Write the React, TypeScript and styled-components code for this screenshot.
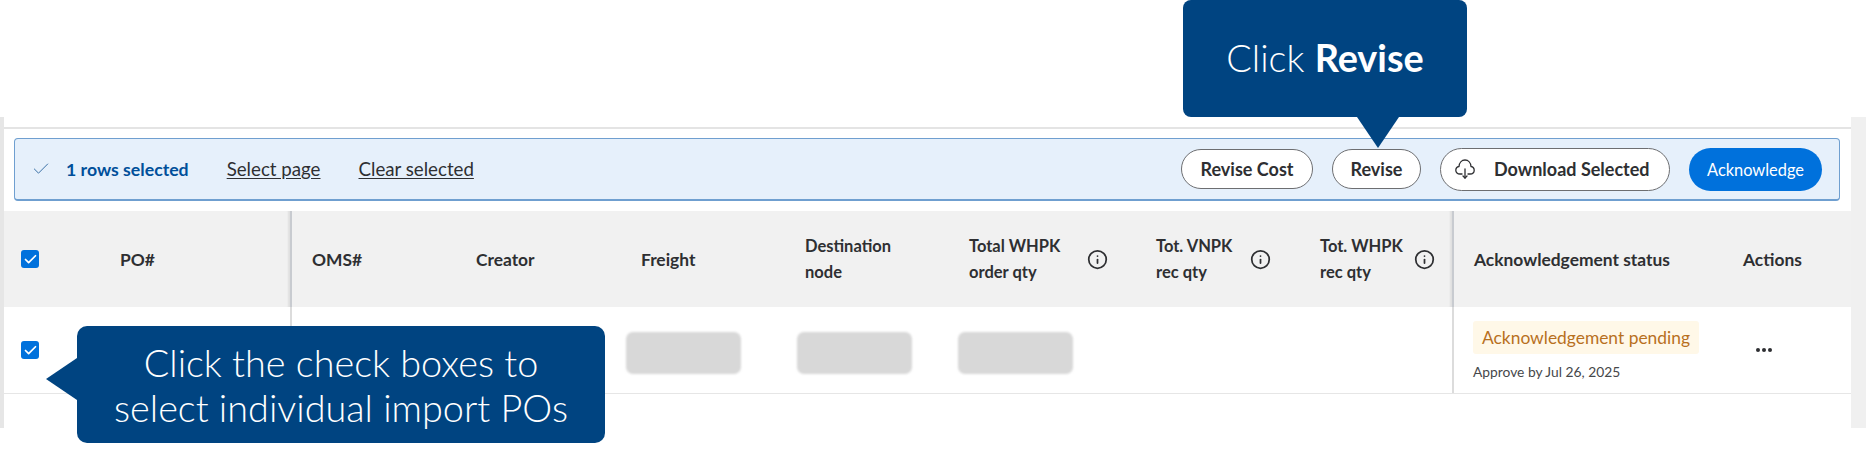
import React from "react";
import styled, { createGlobalStyle } from "styled-components";
import { Check, Info } from "lucide-react";

const GlobalStyle = createGlobalStyle`
  html, body {
    margin: 0;
    padding: 0;
    background: #fff;
    font-family: Lato, "Open Sans", sans-serif;
    color: #2e2f32;
  }
`;

const columns = "116px 172px 184px 165px 164px 164px 187px 164px 134px 289px 108px";

const CheckBox = () => (
  <Box>
    <Check size={15} strokeWidth={2.8} color="#fff" />
  </Box>
);

const HeadInfo = () => (
  <InfoWrap>
    <Info size={21} strokeWidth={2} color="#2e2f32" />
  </InfoWrap>
);

const CloudIcon = () => (
  <svg width="20" height="20" viewBox="0 0 20 20" fill="none" stroke="#2e2f32" strokeWidth="1.3" strokeLinecap="round" strokeLinejoin="round">
    <path d="M7 15H5C2.5 15 .8 13.4.8 11.2c0-2 1.4-3.4 3.2-3.7C4.200 3.700 6.700 1 10 1s5.800 2.700 6 6.500c1.800.3 3.200 1.700 3.200 3.700 0 2.200-1.700 3.800-4.200 3.800h-2" />
    <path d="M10 10v9" />
    <path d="M8 17l2 2 2-2" />
  </svg>
);

export default function App() {
  return (
    <Page>
      <GlobalStyle />
      <TopCallout>
        <span>
          Click <b>Revise</b>
        </span>
      </TopCallout>
      <Frame>
        <TopRule />
        <SelectionBar>
          <SelectionLeft>
            <Check size={20} strokeWidth={1.2} color="#3a70a6" />
            <RowsCount>1 rows selected</RowsCount>
            <BarLink>Select page</BarLink>
            <BarLink>Clear selected</BarLink>
          </SelectionLeft>
          <SelectionRight>
            <PillButton $width={132}>Revise Cost</PillButton>
            <PillButton $width={89}>Revise</PillButton>
            <DownloadButton>
              <CloudIcon />
              Download Selected
            </DownloadButton>
            <PrimaryButton>Acknowledge</PrimaryButton>
          </SelectionRight>
        </SelectionBar>
        <TableHead>
          <HeadCell><CheckBox /></HeadCell>
          <HeadCell $divider>PO#</HeadCell>
          <HeadCell $pad={20}>OMS#</HeadCell>
          <HeadCell>Creator</HeadCell>
          <HeadCell>Freight</HeadCell>
          <HeadCell>
            <HeadText $width={150}>Destination<br />node</HeadText>
          </HeadCell>
          <HeadCell>
            <HeadText $width={118}>Total WHPK<br />order qty</HeadText>
            <HeadInfo />
          </HeadCell>
          <HeadCell>
            <HeadText $width={94}>Tot. VNPK<br />rec qty</HeadText>
            <HeadInfo />
          </HeadCell>
          <HeadCell $divider>
            <HeadText $width={94}>Tot. WHPK<br />rec qty</HeadText>
            <HeadInfo />
          </HeadCell>
          <HeadCell $pad={20}>Acknowledgement status</HeadCell>
          <HeadCell>Actions</HeadCell>
        </TableHead>
        <TableRow>
          <RowCell $pad={17}><CheckBox /></RowCell>
          <RowCell $divider />
          <RowCell />
          <RowCell />
          <RowCell><Blurred $shift={-15} /></RowCell>
          <RowCell><Blurred $shift={-8} /></RowCell>
          <RowCell><Blurred $shift={-11} /></RowCell>
          <RowCell />
          <RowCell $divider />
          <StatusCell>
            <StatusPill>Acknowledgement pending</StatusPill>
            <ApproveBy>Approve by Jul 26, 2025</ApproveBy>
          </StatusCell>
          <RowCell>
            <Dots>
              <i /><i /><i />
            </Dots>
          </RowCell>
        </TableRow>
      </Frame>
      <LeftCallout>
        Click the check boxes to
        <br />
        select individual import POs
      </LeftCallout>
    </Page>
  );
}

const Page = styled.div`
  position: relative;
  width: 1866px;
  height: 453px;
  overflow: hidden;
  background: #fff;
`;

const Frame = styled.div`
  box-sizing: border-box;
  margin-top: 117px;
  height: 311px;
  border-left: 4px solid #e6e6e6;
  border-right: 15px solid #f0f0f0;
  display: flex;
  flex-direction: column;
`;

const TopRule = styled.div`
  height: 2px;
  margin-top: 10px;
  background: #e4e4e4;
`;

const SelectionBar = styled.div`
  box-sizing: border-box;
  height: 63px;
  margin: 9px 11px 10px 10px;
  padding: 0 17px 0 16px;
  display: flex;
  align-items: center;
  justify-content: space-between;
  background: #e6f0fb;
  border: 1px solid #6f9fd0;
  border-bottom-width: 2px;
  border-radius: 4px;
`;

const SelectionLeft = styled.div`
  display: flex;
  align-items: center;
`;

const RowsCount = styled.span`
  margin-left: 15px;
  font-size: 17.7px;
  font-weight: 700;
  color: #004f9a;
`;

const BarLink = styled.a`
  margin-left: 38px;
  font-size: 18.7px;
  color: #2e2f32;
  text-decoration: underline;
  text-underline-offset: 2px;
`;

const SelectionRight = styled.div`
  display: flex;
  align-items: center;
  gap: 19px;
`;

const PillButton = styled.button<{ $width: number }>`
  box-sizing: border-box;
  width: ${(p) => p.$width}px;
  height: 40px;
  padding: 0;
  background: #fff;
  border: 1px solid #6d6e71;
  border-radius: 20px;
  font-family: inherit;
  font-size: 18px;
  font-weight: 700;
  color: #2e2f32;
`;

const DownloadButton = styled.button`
  box-sizing: border-box;
  width: 230px;
  height: 43px;
  padding: 0 0 0 14px;
  display: flex;
  align-items: center;
  gap: 19px;
  background: #fff;
  border: 1px solid #6d6e71;
  border-radius: 22px;
  font-family: inherit;
  font-size: 18px;
  font-weight: 700;
  color: #2e2f32;
`;

const PrimaryButton = styled.button`
  box-sizing: border-box;
  width: 133px;
  height: 43px;
  padding: 0;
  background: #0071dc;
  border: 0;
  border-radius: 22px;
  font-family: inherit;
  font-size: 16.4px;
  color: #fff;
`;

const TableHead = styled.div`
  display: grid;
  grid-template-columns: ${columns};
  height: 96px;
  background: #f1f1f1;
`;

const HeadCell = styled.div<{ $divider?: boolean; $pad?: number }>`
  box-sizing: border-box;
  display: flex;
  align-items: center;
  padding-left: ${(p) => p.$pad ?? 0}px;
  font-size: 17.4px;
  font-weight: 700;
  color: #2e2f32;
  border-right: ${(p) => (p.$divider ? "2px solid #c8cbd0" : "0")};
  box-shadow: ${(p) => (p.$divider ? "inset -3px 0 2px -1px rgba(0, 0, 0, 0.07)" : "none")};

  &:first-child {
    padding-left: 17px;
  }
`;

const HeadText = styled.span<{ $width: number }>`
  width: ${(p) => p.$width}px;
  flex-shrink: 0;
  font-size: 16.5px;
  line-height: 26px;
`;

const InfoWrap = styled.span`
  display: flex;
`;

const Box = styled.span`
  box-sizing: border-box;
  width: 18px;
  height: 18px;
  display: flex;
  align-items: center;
  justify-content: center;
  background: #0071dc;
  border-radius: 3px;
`;

const TableRow = styled.div`
  display: grid;
  grid-template-columns: ${columns};
  height: 87px;
  box-sizing: border-box;
  border-bottom: 1px solid #e6e6e6;
`;

const RowCell = styled.div<{ $divider?: boolean; $pad?: number }>`
  box-sizing: border-box;
  display: flex;
  align-items: center;
  padding-left: ${(p) => p.$pad ?? 0}px;
  border-right: ${(p) => (p.$divider ? "2px solid #dcdcdc" : "0")};
`;

const Blurred = styled.div<{ $shift: number }>`
  flex-shrink: 0;
  width: 115px;
  height: 42px;
  margin: 6px 0 0 ${(p) => p.$shift}px;
  background: #d8d8d8;
  border-radius: 7px;
  filter: blur(1px);
`;

const StatusCell = styled.div`
  padding: 14px 0 0 19px;
  display: flex;
  flex-direction: column;
  align-items: flex-start;
`;

const StatusPill = styled.span`
  box-sizing: border-box;
  width: 226px;
  height: 33px;
  padding-left: 9px;
  display: flex;
  align-items: center;
  background: #fff8e8;
  border-radius: 3px;
  font-size: 17.4px;
  white-space: nowrap;
  color: #b8701e;
`;

const ApproveBy = styled.span`
  margin-top: 9px;
  font-size: 13.8px;
  line-height: 18px;
  color: #46474a;
`;

const Dots = styled.span`
  margin-left: 13px;
  display: flex;
  gap: 2px;

  i {
    width: 4px;
    height: 4px;
    border-radius: 50%;
    background: #2e2f32;
  }
`;

const TopCallout = styled.div`
  position: absolute;
  z-index: 2;
  left: 1183px;
  top: 0;
  width: 284px;
  height: 117px;
  display: flex;
  align-items: center;
  justify-content: center;
  background: #004481;
  border-radius: 8px;
  font-size: 37.8px;
  font-weight: 300;
  color: #fff;

  b {
    font-weight: 700;
  }

  span {
    margin-top: -2px;
  }

  &::after {
    content: "";
    position: absolute;
    left: 174px;
    top: 117px;
    width: 42px;
    height: 31px;
    background: #004481;
    clip-path: polygon(0 0, 100% 0, 50% 100%);
  }
`;

const LeftCallout = styled.div`
  position: absolute;
  z-index: 2;
  left: 77px;
  top: 326px;
  width: 528px;
  height: 117px;
  display: flex;
  align-items: center;
  justify-content: center;
  text-align: center;
  background: #004481;
  border-radius: 10px;
  font-size: 37.8px;
  font-weight: 300;
  line-height: 45px;
  color: #fff;

  &::before {
    content: "";
    position: absolute;
    left: -31px;
    top: 32px;
    width: 31px;
    height: 42px;
    background: #004481;
    clip-path: polygon(100% 0, 100% 100%, 0 50%);
  }
`;
